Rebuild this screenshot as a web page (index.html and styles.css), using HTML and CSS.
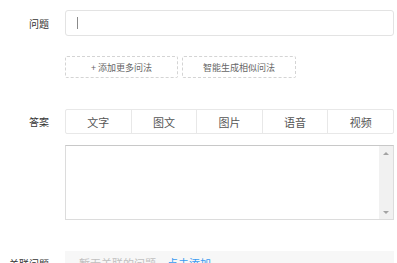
FILE: index.html
```html
<!DOCTYPE html>
<html lang="zh-CN">
<head>
    <meta charset="UTF-8">
    <meta name="viewport" content="width=device-width, initial-scale=1.0">
    <title>问答编辑</title>
    <link rel="stylesheet" href="styles.css">
</head>
<body>
    <div class="form">
        <div class="row">
            <div class="label">问题</div>
            <div class="field">
                <div class="text-input"><span class="caret"></span></div>
            </div>
        </div>

        <div class="row row-actions">
            <div class="label"></div>
            <div class="field actions">
                <button class="dash-btn btn-more">+ 添加更多问法</button>
                <button class="dash-btn btn-similar">智能生成相似问法</button>
            </div>
        </div>

        <div class="row row-answer">
            <div class="label">答案</div>
            <div class="field tabs">
                <div class="tab">文字</div>
                <div class="tab">图文</div>
                <div class="tab">图片</div>
                <div class="tab">语音</div>
                <div class="tab">视频</div>
            </div>
        </div>

        <div class="row row-textarea">
            <div class="label"></div>
            <div class="field answer-box">
                <textarea class="answer-text"></textarea>
                <div class="scrollbar">
                    <span class="arrow arrow-up"></span>
                    <span class="arrow arrow-down"></span>
                </div>
            </div>
        </div>

        <div class="row row-related">
            <div class="label">关联问题</div>
            <div class="field related">
                <span class="empty">暂无关联的问题</span>
                <a class="add-link">点击添加</a>
            </div>
        </div>
    </div>
</body>
</html>
```

FILE: styles.css
```css
body {
    margin: 0;
    background-color: #fff;
    font-family: "Noto Sans CJK SC", "Noto Sans", sans-serif;
    color: #333;
}
.form {
    padding: 10px 3px 0 0;
}
.row {
    display: flex;
    align-items: center;
}
.label {
    width: 49px;
    padding-right: 16px;
    text-align: right;
    font-size: 10px;
    color: #333;
    flex-shrink: 0;
}
.field {
    flex: 1;
}
.text-input {
    height: 24px;
    border: 1px solid #e3e3e3;
    border-radius: 3px;
    padding-left: 11px;
    display: flex;
    align-items: center;
}
.caret {
    width: 1px;
    height: 12px;
    background-color: #8a8a8a;
}
.row-actions {
    margin-top: 20px;
}
.actions {
    display: flex;
    gap: 4px;
}
.dash-btn {
    height: 22px;
    background: #fff;
    border: 1px dashed #d4d4d4;
    border-radius: 2px;
    font-family: inherit;
    font-size: 9px;
    color: #666;
    padding: 0;
}
.btn-more {
    width: 113px;
}
.btn-similar {
    width: 114px;
}
.row-answer {
    margin-top: 31px;
}
.tabs {
    display: flex;
    height: 23px;
    border: 1px solid #e8e8e8;
    border-radius: 2px;
}
.tab {
    flex: 1;
    display: flex;
    align-items: center;
    justify-content: center;
    font-size: 11px;
    color: #555;
    border-left: 1px solid #e8e8e8;
}
.tab:first-child {
    border-left: none;
}
.row-textarea {
    margin-top: 11px;
}
.answer-box {
    display: flex;
    height: 73px;
    border: 1px solid #dcdcdc;
    border-top-color: #c8c8c8;
}
.answer-text {
    flex: 1;
    border: none;
    padding: 4px;
    margin: 0;
    resize: none;
    overflow: hidden;
    outline: none;
}
.scrollbar {
    width: 14px;
    background-color: #f1f1f1;
    display: flex;
    flex-direction: column;
    justify-content: space-between;
    align-items: center;
    padding: 6px 0 5px;
}
.arrow {
    width: 0;
    height: 0;
    border-left: 3px solid transparent;
    border-right: 3px solid transparent;
}
.arrow-up {
    border-bottom: 3px solid #a3a3a3;
}
.arrow-down {
    border-top: 3px solid #a3a3a3;
}
.row-related {
    margin-top: 31px;
}
.related {
    height: 24px;
    background-color: #f7f7f7;
    padding-left: 14px;
    display: flex;
    align-items: center;
    font-size: 11px;
}
.empty {
    color: #c0c0c0;
}
.add-link {
    margin-left: 11px;
    color: #3a9bf0;
}
```
